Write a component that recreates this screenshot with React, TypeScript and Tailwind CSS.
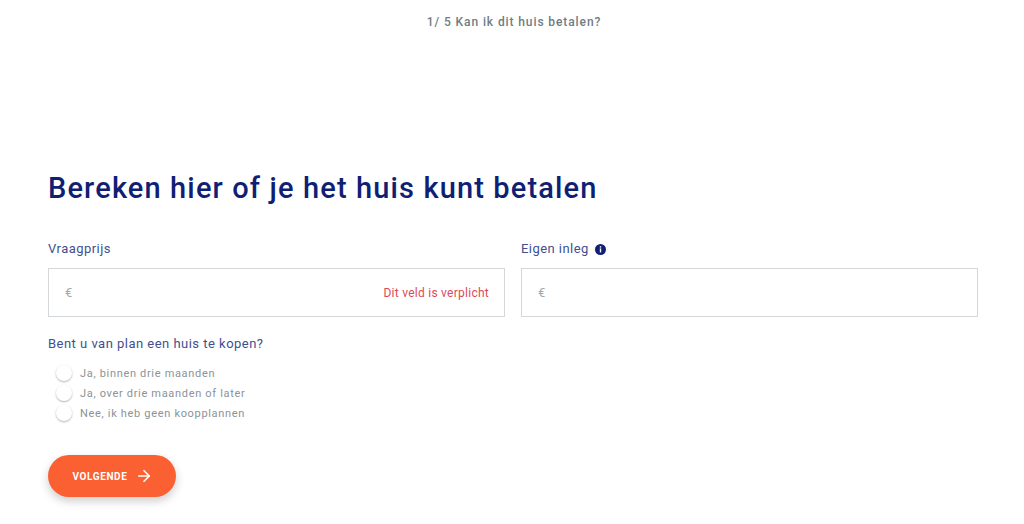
import { ArrowRight } from 'lucide-react';

const options = ['Ja, binnen drie maanden', 'Ja, over drie maanden of later', 'Nee, ik heb geen koopplannen'];

function PriceField({ error }: { error?: string }) {
	return (
		<div className="flex h-[49px] items-center justify-between border border-[#d4d7da] pl-4 pr-[15px]">
			<span className="text-[13px] text-[#a3a9ad]">€</span>
			{error && <span className="text-xs tracking-[0.26px] text-[#dc4a5a]">{error}</span>}
		</div>
	);
}

export default function App() {
	return (
		<div className="flex h-[524px] flex-col overflow-hidden bg-white pl-12 pr-[46px] font-['Roboto',sans-serif]">
			<p className="-mr-[50px] -ml-12 mt-[14px] text-center text-xs font-medium leading-4 tracking-[0.9px] text-[#6f7c85]">
				1/ 5 Kan ik dit huis betalen?
			</p>

			<h1 className="mt-[140px] text-[29px] font-medium leading-9 tracking-[1.13px] text-[#101f74]">
				Bereken hier of je het huis kunt betalen
			</h1>

			<div className="mt-[34px] grid grid-cols-2 gap-x-4">
				<div>
					<label className="mb-[10px] block text-[13px] leading-[18px] tracking-[0.45px] text-[#414f8f]">Vraagprijs</label>
					<PriceField error="Dit veld is verplicht" />
				</div>
				<div>
					<label className="mb-[10px] flex items-center gap-[6px] text-[13px] leading-[18px] tracking-[0.45px] text-[#414f8f]">
						Eigen inleg
						<svg width="11" height="11" viewBox="0 0 11 11" className="mt-px">
							<circle cx="5.5" cy="5.5" r="5.5" fill="#101f74" />
							<rect x="4.8" y="2.2" width="1.4" height="1.4" fill="#fff" />
							<rect x="4.8" y="4.4" width="1.4" height="4" fill="#fff" />
						</svg>
					</label>
					<PriceField />
				</div>
			</div>

			<p className="mt-[18px] text-[13px] leading-[18px] tracking-[0.48px] text-[#414f8f]">Bent u van plan een huis te kopen?</p>

			<ul className="mt-[11px] flex flex-col">
				{options.map((option) => (
					<li key={option} className="flex h-5 items-center gap-2 pl-2">
						<span className="-mt-[2px] size-4 rounded-full bg-white shadow-[0_1px_2px_rgba(0,0,0,0.3)]" />
						<span className="text-[11px] tracking-[0.68px] text-[#8b9398]">{option}</span>
					</li>
				))}
			</ul>

			<button className="mt-[31px] flex h-[42px] w-[128px] items-center justify-center gap-[8px] rounded-full bg-[#fa6032] pl-[2px] text-[10px] font-bold tracking-[0.6px] text-white shadow-[0_4px_10px_rgba(0,0,0,0.2)]">
				VOLGENDE
				<ArrowRight size={18} strokeWidth={2.2} />
			</button>
		</div>
	);
}
